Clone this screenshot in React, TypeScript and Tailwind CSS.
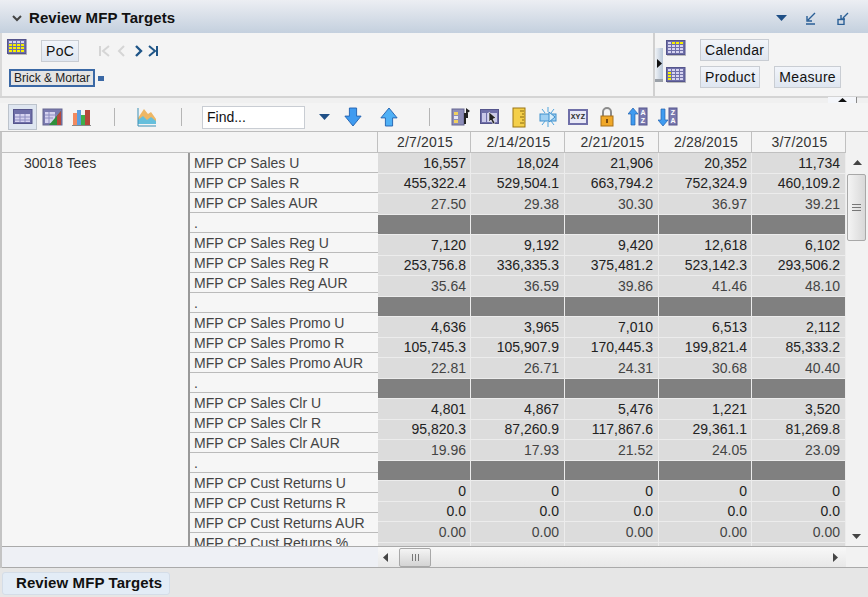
import React from 'react'

const dates = ['2/7/2015', '2/14/2015', '2/21/2015', '2/28/2015', '3/7/2015']

// label + five values, null values = dark separator row
const rows: [string, string[] | null][] = [
  ['MFP CP Sales U', ['16,557', '18,024', '21,906', '20,352', '11,734']],
  ['MFP CP Sales R', ['455,322.4', '529,504.1', '663,794.2', '752,324.9', '460,109.2']],
  ['MFP CP Sales AUR', ['27.50', '29.38', '30.30', '36.97', '39.21']],
  ['.', null],
  ['MFP CP Sales Reg U', ['7,120', '9,192', '9,420', '12,618', '6,102']],
  ['MFP CP Sales Reg R', ['253,756.8', '336,335.3', '375,481.2', '523,142.3', '293,506.2']],
  ['MFP CP Sales Reg AUR', ['35.64', '36.59', '39.86', '41.46', '48.10']],
  ['.', null],
  ['MFP CP Sales Promo U', ['4,636', '3,965', '7,010', '6,513', '2,112']],
  ['MFP CP Sales Promo R', ['105,745.3', '105,907.9', '170,445.3', '199,821.4', '85,333.2']],
  ['MFP CP Sales Promo AUR', ['22.81', '26.71', '24.31', '30.68', '40.40']],
  ['.', null],
  ['MFP CP Sales Clr U', ['4,801', '4,867', '5,476', '1,221', '3,520']],
  ['MFP CP Sales Clr R', ['95,820.3', '87,260.9', '117,867.6', '29,361.1', '81,269.8']],
  ['MFP CP Sales Clr AUR', ['19.96', '17.93', '21.52', '24.05', '23.09']],
  ['.', null],
  ['MFP CP Cust Returns U', ['0', '0', '0', '0', '0']],
  ['MFP CP Cust Returns R', ['0.0', '0.0', '0.0', '0.0', '0.0']],
  ['MFP CP Cust Returns AUR', ['0.00', '0.00', '0.00', '0.00', '0.00']],
  ['MFP CP Cust Returns %', ['', '', '', '', '']],
]

const colWidths = ['w-[93px]', 'w-[94px]', 'w-[94px]', 'w-[93px]', 'w-[94px]']
const colPads = ['pr-[4px]', 'pr-[5px]', 'pr-[5px]', 'pr-[4px]', 'pr-[5px]']

function GridIcon({ hl }: { hl: 'all' | 'top' | 'left' }) {
  const cells = []
  for (let r = 0; r < 4; r++) {
    for (let c = 0; c < 4; c++) {
      const on = hl === 'all' ? r > 0 : hl === 'top' ? r === 0 && c > 0 : c === 0 && r > 0
      cells.push(<rect key={`${r}-${c}`} x={2 + c * 4} y={2 + r * 3} width="3" height="2" fill={on ? '#f7f000' : '#d6d3f0'} />)
    }
  }
  return (
    <svg width="20" height="16" viewBox="0 0 20 16">
      <rect x="0.5" y="0.5" width="18.5" height="14" fill="#6f6fa8" stroke="#55558c" />
      {cells}
      <path d="M1 15.5h19" stroke="#bbb" />
    </svg>
  )
}

function Btn({ children }: { children: React.ReactNode }) {
  return (
    <div className="h-[22px] px-[4px] flex items-center border border-[#c9cdd3] bg-gradient-to-b from-[#f2f5fa] to-[#dfe6f0] text-[14px] tracking-[0.3px] text-[#111] leading-none">
      {children}
    </div>
  )
}

function ToolbarIcons() {
  return (
    <div className="flex items-center h-[29px] shrink-0 bg-[#f4f4f4] border-b border-[#bdbdbd]">
      <div className="ml-[8px] w-[29px] h-[26px] flex items-center justify-center bg-[#dfe6f0] border border-[#bcc3cc]">
        <svg width="20" height="16" viewBox="0 0 20 16">
          <rect x="0.5" y="0.5" width="18.5" height="14" fill="#6f6fa8" stroke="#55558c" />
          <path d="M2 5h15v8H2z" fill="#d6d3f0" />
          <path d="M7 5v8M12 5v8M2 8h15M2 11h15" stroke="#8c8cc0" />
        </svg>
      </div>
      <svg className="ml-[5px]" width="22" height="20" viewBox="0 0 22 20">
        <rect x="1" y="2" width="19" height="16" fill="#7a7ab0" stroke="#66668f" />
        <path d="M3 5h10v11H3z" fill="#d6d3f0" />
        <path d="M3 8h12M3 11h8M7 5v11" stroke="#8c8cc0" />
        <path d="M7 18 19 4v14z" fill="#2f8f3c" />
        <path d="M15 18V9l4-5v14z" fill="#b5473c" />
      </svg>
      <svg className="ml-[8px]" width="20" height="20" viewBox="0 0 20 20">
        <rect x="1" y="6" width="4" height="12" fill="#f28a60" />
        <rect x="5" y="3" width="4" height="15" fill="#5aa0e0" />
        <rect x="9" y="8" width="4" height="10" fill="#3fae4a" />
        <rect x="13" y="3" width="5" height="15" fill="#b5473c" />
        <path d="M0 18.5h19" stroke="#888" />
      </svg>
      <div className="ml-[22px] w-px h-[18px] bg-[#b5b5b5]" />
      <svg className="ml-[22px]" width="20" height="20" viewBox="0 0 20 20">
        <path d="M1 11 7 2l4 5 3-2 5 7v3H1z" fill="#eeb765" />
        <path d="M1 17v-4l5-4 4 4 4-3 5 4v3z" fill="#66bfdc" />
        <path d="M1 1v18h18" stroke="#3a8fb5" fill="none" />
      </svg>
      <div className="ml-[24px] w-px h-[18px] bg-[#b5b5b5]" />
      <div className="ml-[20px] w-[103px] h-[23px] bg-white border border-[#c9cdd3] flex items-center pl-1 text-[14px] text-[#111]">
        Find...
      </div>
      <svg className="ml-[14px]" width="11" height="6" viewBox="0 0 11 6"><path d="M0 0h11L5.5 6z" fill="#1f4f86" /></svg>
      <svg className="ml-[14px]" width="18" height="20" viewBox="0 0 20 22">
        <path d="M6 1h8v9h5l-9 11L1 10h5z" fill="#3f9bf0" stroke="#1f5fae" />
      </svg>
      <svg className="ml-[18px]" width="18" height="20" viewBox="0 0 20 22">
        <path d="M6 21h8v-9h5L10 1 1 12h5z" fill="#4fb0f5" stroke="#1f5fae" />
      </svg>
      <div className="ml-[31px] w-px h-[18px] bg-[#b5b5b5]" />
      <svg className="ml-[21px]" width="21" height="20" viewBox="0 0 21 20">
        <rect x="1" y="2" width="12" height="16" fill="#8d8db8" stroke="#666690" />
        <path d="M3 5h4v3H3zM3 13h4v3H3z" fill="#f0d060" />
        <path d="M3 9h4v3H3z" fill="#e8e8f4" />
        <path d="M13 6h4v5h-2v6h-2zM15 1l4 3-4 3z" fill="#222" />
      </svg>
      <svg className="ml-[8px]" width="20" height="16" viewBox="0 0 20 16">
        <rect x="0.5" y="0.5" width="18" height="14" fill="#6f6fa8" stroke="#55558c" />
        <path d="M2 4h4v9H2zM7 4h10v9H7z" fill="#c9c8e8" />
        <path d="M9 3l7 6-3 1 2 4-2 1-2-4-2 2z" fill="#222" stroke="#fff" strokeWidth="0.6" />
      </svg>
      <svg className="ml-[12px]" width="14" height="21" viewBox="0 0 14 21">
        <rect x="1" y="1" width="12" height="19" fill="#f4cf4a" stroke="#9a7412" />
        <path d="M8 4h4M10 7h2M8 10h4M10 13h2M8 16h4" stroke="#8a6a10" />
      </svg>
      <svg className="ml-[12px]" width="20" height="20" viewBox="0 0 20 20">
        <rect x="2" y="7" width="16" height="7" fill="#9fd0f2" stroke="#3f8fcc" />
        <path d="M11 5l6 5-6 5z" fill="#d8eefb" stroke="#3f8fcc" />
        <path d="M10 0v5M10 15v5M4 2l3 4M16 2l-3 4M4 18l3-4M16 18l-3-4" stroke="#4fa3dc" />
      </svg>
      <div className="ml-[10px] w-[20px] h-[16px] bg-[#e8e8f6] border-2 border-[#6f6fa8] flex items-center justify-center text-[8px] font-bold text-[#333] font-['Liberation_Mono',monospace] leading-none">
        XYZ
      </div>
      <svg className="ml-[12px]" width="14" height="20" viewBox="0 0 14 20">
        <path d="M3 9V5a4 4 0 0 1 8 0v4" fill="none" stroke="#8c8c8c" strokeWidth="2" />
        <rect x="1" y="9" width="12" height="10" fill="#f0a828" stroke="#a8701a" />
        <rect x="6" y="12" width="2" height="4" fill="#7a4a10" />
      </svg>
      <svg className="ml-[14px]" width="20" height="20" viewBox="0 0 20 20">
        <path d="M5 1l5 6H7v11H3V7H0z" fill="#3f9bf0" stroke="#1f5fae" strokeWidth="0.7" />
        <rect x="11" y="1" width="8" height="17" fill="#7a7ab0" stroke="#55558c" />
        <text x="15" y="8" textAnchor="middle" fontSize="7" fontWeight="700" fill="#fff" fontFamily="Liberation Sans">A</text>
        <text x="15" y="16" textAnchor="middle" fontSize="7" fontWeight="700" fill="#fff" fontFamily="Liberation Sans">Z</text>
      </svg>
      <svg className="ml-[10px]" width="20" height="20" viewBox="0 0 20 20">
        <path d="M5 19l5-6H7V2H3v11H0z" fill="#3f9bf0" stroke="#1f5fae" strokeWidth="0.7" />
        <rect x="11" y="1" width="8" height="17" fill="#7a7ab0" stroke="#55558c" />
        <text x="15" y="8" textAnchor="middle" fontSize="7" fontWeight="700" fill="#fff" fontFamily="Liberation Sans">Z</text>
        <text x="15" y="16" textAnchor="middle" fontSize="7" fontWeight="700" fill="#fff" fontFamily="Liberation Sans">A</text>
      </svg>
    </div>
  )
}

export default function App() {
  return (
    <div className="w-[868px] h-[597px] overflow-hidden flex flex-col bg-[#e6e6e6] font-['Liberation_Sans',Arial,sans-serif] text-[14px]">
      {/* Title bar */}
      <div className="h-[33px] shrink-0 flex items-center pt-[3px] bg-gradient-to-b from-[#eceef3] to-[#c4d0de]">
        <svg className="ml-[12px]" width="10" height="7" viewBox="0 0 10 7">
          <path d="M1 1l4 4 4-4" fill="none" stroke="#444" strokeWidth="2" />
        </svg>
        <div className="ml-[7px] font-bold text-[15px] text-[#111] tracking-[0.1px]">Review MFP Targets</div>
        <div className="ml-auto flex items-center">
          <svg width="11" height="6" viewBox="0 0 11 6"><path d="M0 0h11L5.5 6z" fill="#1f4f86" /></svg>
          <svg className="ml-[18px]" width="12" height="13" viewBox="0 0 12 13">
            <path d="M10 1 3 8M2 4v5h5M1 12h9" fill="none" stroke="#2a5f96" strokeWidth="1.4" />
          </svg>
          <svg className="ml-[20px] mr-[19px]" width="12" height="13" viewBox="0 0 12 13">
            <path d="M11 1 6 6M4 3v4h4" fill="none" stroke="#2a5f96" strokeWidth="1.4" />
            <rect x="1" y="7.5" width="6" height="5" fill="none" stroke="#2a5f96" strokeWidth="1.4" />
          </svg>
        </div>
      </div>

      {/* Filters area */}
      <div className="h-[63px] shrink-0 flex bg-[#f4f4f4] border-l-2 border-[#d9d9d9]">
        <div className="w-[651px] pt-[6px] pl-[5px]">
          <div className="flex items-start">
            <GridIcon hl="all" />
            <div className="ml-[14px] mt-[1px]"><Btn>PoC</Btn></div>
            <svg className="ml-[20px] mt-[6px]" width="60" height="12" viewBox="0 0 60 12">
              <path d="M1 1v10M10 1 4 6l6 5" fill="none" stroke="#d5d5d5" strokeWidth="2" />
              <path d="M25 1l-5 5 5 5" fill="none" stroke="#d5d5d5" strokeWidth="2" />
              <path d="M37 1l5 5-5 5" fill="none" stroke="#1f5587" strokeWidth="2.4" />
              <path d="M50 1l6 5-6 5M58 1v10" fill="none" stroke="#1f5587" strokeWidth="2" />
            </svg>
          </div>
          <div className="flex items-center mt-[7px] ml-[2px]">
            <div className="h-[18px] w-[86px] border-2 border-[#3a68a5] bg-[#e4e4e4] flex items-center justify-center text-[12px] text-[#222] leading-none">
              Brick &amp; Mortar
            </div>
            <div className="ml-[3px] mt-[1px] w-[6px] h-[5px] bg-[#3a68a5]" />
          </div>
        </div>
        <div className="w-[2px] bg-[#d0d0d0]" />
        <div className="relative flex-1 pl-[11px] pt-[7px]">
          <div className="absolute left-0 top-[15px] w-[8px] h-[34px] bg-gradient-to-r from-[#f0f3f7] to-[#b8c6d6] border-b-[3px] border-[#9aa0a8] flex items-center justify-center">
            <svg width="5" height="9" viewBox="0 0 5 9"><path d="M0 0l5 4.5L0 9z" fill="#111" /></svg>
          </div>
          <div className="flex items-start">
            <GridIcon hl="top" />
            <div className="ml-[14px] -mt-[1px]"><Btn>Calendar</Btn></div>
          </div>
          <div className="flex items-start mt-[6px]">
            <GridIcon hl="left" />
            <div className="ml-[14px] -mt-[1px]"><Btn>Product</Btn></div>
            <div className="ml-[14px] -mt-[1px]"><Btn>Measure</Btn></div>
          </div>
        </div>
      </div>

      {/* Splitter */}
      <div className="relative h-[7px] shrink-0 bg-[#f0f0f0] border-t-2 border-[#d4d4d4]">
        <div className="absolute left-[828px] top-[-1px] w-[29px] h-[6px] bg-[#f4f6fa] border-r border-[#888] flex items-center justify-center">
          <svg width="9" height="4" viewBox="0 0 9 4"><path d="M0 4h9L4.5 0z" fill="#111" /></svg>
        </div>
      </div>

      <ToolbarIcons />

      {/* Table */}
      <div className="flex-1 flex flex-col border-l-2 border-[#c4c4c4] min-h-0">
        <div className="flex flex-1 min-h-0">
          <div className="w-[844px]">
            {/* Date header */}
            <div className="h-[21px] flex bg-[#f4f4f4] border-b border-[#c0c0c0]">
              <div className="w-[376px] border-r border-[#c0c0c0]" />
              {dates.map((d, i) => (
                <div key={d} className={`${colWidths[i]} pl-[2px] border-r border-[#c0c0c0] flex items-center justify-center text-[#333] tracking-[0.2px]`}>
                  {d}
                </div>
              ))}
            </div>
            {/* Body */}
            <div className="flex h-[393px] overflow-hidden">
              <div className="w-[186px] bg-[#f6f6f6] pl-[22px] text-[#333]">30018 Tees</div>
              <div className="w-[190px] bg-[#f6f6f6] border-l-2 border-[#999]">
                {rows.map(([label], i) => (
                  <div key={i} className="h-[20px] pl-[4px] border-b border-[#bbb] flex items-center text-[#444] whitespace-nowrap leading-none">
                    {label}
                  </div>
                ))}
              </div>
              <div className="w-[468px]">
                {rows.map(([label, vals], i) => (
                  <div key={i} className="h-[20.5px] flex">
                    {dates.map((_, c) => (
                      <div
                        key={c}
                        className={`${colWidths[c]} ${colPads[c]} h-full flex items-center justify-end border-r border-b border-[#ececec] leading-none ${vals ? 'bg-[#dcdcdc]' : 'bg-[#808080]'} ${label.endsWith('AUR') ? 'text-[#444]' : 'text-[#222]'}`}
                      >
                        {vals ? vals[c] : ''}
                      </div>
                    ))}
                  </div>
                ))}
              </div>
            </div>
          </div>
          {/* Vertical scrollbar */}
          <div className="relative w-[22px] bg-[#f2f2f2]">
            <div className="flex justify-center pt-[28px]">
              <svg width="9" height="5" viewBox="0 0 9 5"><path d="M0 5h9L4.5 0z" fill="#444" /></svg>
            </div>
            <div className="mx-[1px] mt-[9px] w-[19px] h-[67px] rounded-[2px] border border-[#a8a8a8] bg-gradient-to-r from-[#f4f4f4] to-[#d8d8d8] flex items-center justify-center">
              <div className="w-[9px] h-[7px] border-y border-[#777] flex items-center"><div className="w-full h-px bg-[#777]" /></div>
            </div>
            <div className="absolute left-[6px] top-[402px]">
              <svg width="9" height="5" viewBox="0 0 9 5"><path d="M0 0h9L4.5 5z" fill="#444" /></svg>
            </div>
          </div>
        </div>

        {/* Horizontal scrollbar row */}
        <div className="h-[22px] shrink-0 flex border-y border-[#aaa]">
          <div className="w-[376px] bg-[#eef0f5]" />
          <div className="w-[468px] flex items-center bg-gradient-to-b from-[#f8f8f8] to-[#e8e8e8]">
            <svg className="ml-[5px]" width="5" height="9" viewBox="0 0 5 9"><path d="M5 0 0 4.5 5 9z" fill="#444" /></svg>
            <div className="ml-[11px] w-[32px] h-[19px] rounded-[2px] border border-[#a8a8a8] bg-gradient-to-b from-[#f4f4f4] to-[#d4d4d4] flex items-center justify-center gap-[2px]">
              <div className="w-px h-[7px] bg-[#777]" />
              <div className="w-px h-[7px] bg-[#777]" />
              <div className="w-px h-[7px] bg-[#777]" />
            </div>
            <svg className="ml-auto mr-[8px]" width="5" height="9" viewBox="0 0 5 9"><path d="M0 0l5 4.5L0 9z" fill="#444" /></svg>
          </div>
          <div className="flex-1 bg-[#f2f2f2]" />
        </div>
      </div>

      {/* Tabs */}
      <div className="h-[29px] shrink-0 bg-[#e6e6e6] pt-[4px] pl-[2px]">
        <div className="w-[168px] h-[23px] rounded-[3px] border border-[#d4dde8] bg-[#e3ecf6] flex items-center pl-[13px] font-bold text-[15px] text-[#111] tracking-[0.1px]">
          Review MFP Targets
        </div>
      </div>
    </div>
  )
}
